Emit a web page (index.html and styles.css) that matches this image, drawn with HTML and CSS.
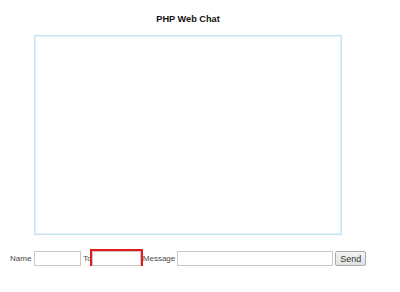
FILE: index.html
```html
<!DOCTYPE html>
<html lang="en">
<head>
  <meta charset="UTF-8" />
  <title>PHP Web Chat</title>
  <link rel="stylesheet" href="styles.css">
</head>
<body>
  <div class="chat-wrap">
    <h1 class="chat-title">PHP Web Chat</h1>
    <div class="chat-log" id="chat-log"></div>

    <form class="chat-form" onsubmit="return false;">
      <label for="name" class="lbl">Name</label>
      <input type="text" id="name" class="field field-name" />
      <label for="to" class="lbl lbl-to">To</label>
      <input type="text" id="to" class="field field-to invalid" />
      <label for="message" class="lbl lbl-msg">Message</label>
      <input type="text" id="message" class="field field-msg" />
      <button type="submit" class="send-btn">Send</button>
    </form>
  </div>
</body>
</html>
```

FILE: styles.css
```css
body {
  margin: 8px;
  font-family: 'Liberation Sans', Arial, sans-serif;
  background: #fff;
  color: #333;
}
.chat-wrap {
  width: 360px;
}
.chat-title {
  margin: 6px 0 10px;
  font-size: 9.2px;
  line-height: 11px;
  font-weight: bold;
  text-align: center;
  color: #111;
}
.chat-log {
  width: 306px;
  height: 198px;
  margin: 0 auto;
  border: 1px solid #c2e2f2;
  box-shadow: inset 1px 1px 0 #e4f3fa, inset -1px -1px 0 #e4f3fa;
  background: #fff;
}
.chat-form {
  display: flex;
  align-items: center;
  margin-top: 16px;
  padding-left: 2px;
  height: 15px;
}
.lbl {
  font-size: 8px;
  color: #4a4a4a;
}
.field {
  box-sizing: border-box;
  height: 15px;
  padding: 1px 2px;
  border: 1px solid #c8c8c8;
  font-size: 8px;
  font-family: inherit;
  background: #fff;
}
.field-name {
  width: 47px;
  margin: 0 2px 0 3px;
}
.field-to {
  width: 49px;
  margin: 0 2px 0 0;
}
.field-msg {
  width: 156px;
  margin: 0 2px 0 2px;
}
.invalid {
  outline: 2px solid #e31b1b;
  outline-offset: 0;
  position: relative;
  z-index: 1;
}
.send-btn {
  box-sizing: border-box;
  width: 31px;
  height: 15px;
  padding: 0;
  font-size: 9px;
  font-family: inherit;
  color: #333;
  background: linear-gradient(#f4f4f4, #e2e2e2);
  border: 1px solid #a9a9a9;
  border-radius: 2px;
}
```
